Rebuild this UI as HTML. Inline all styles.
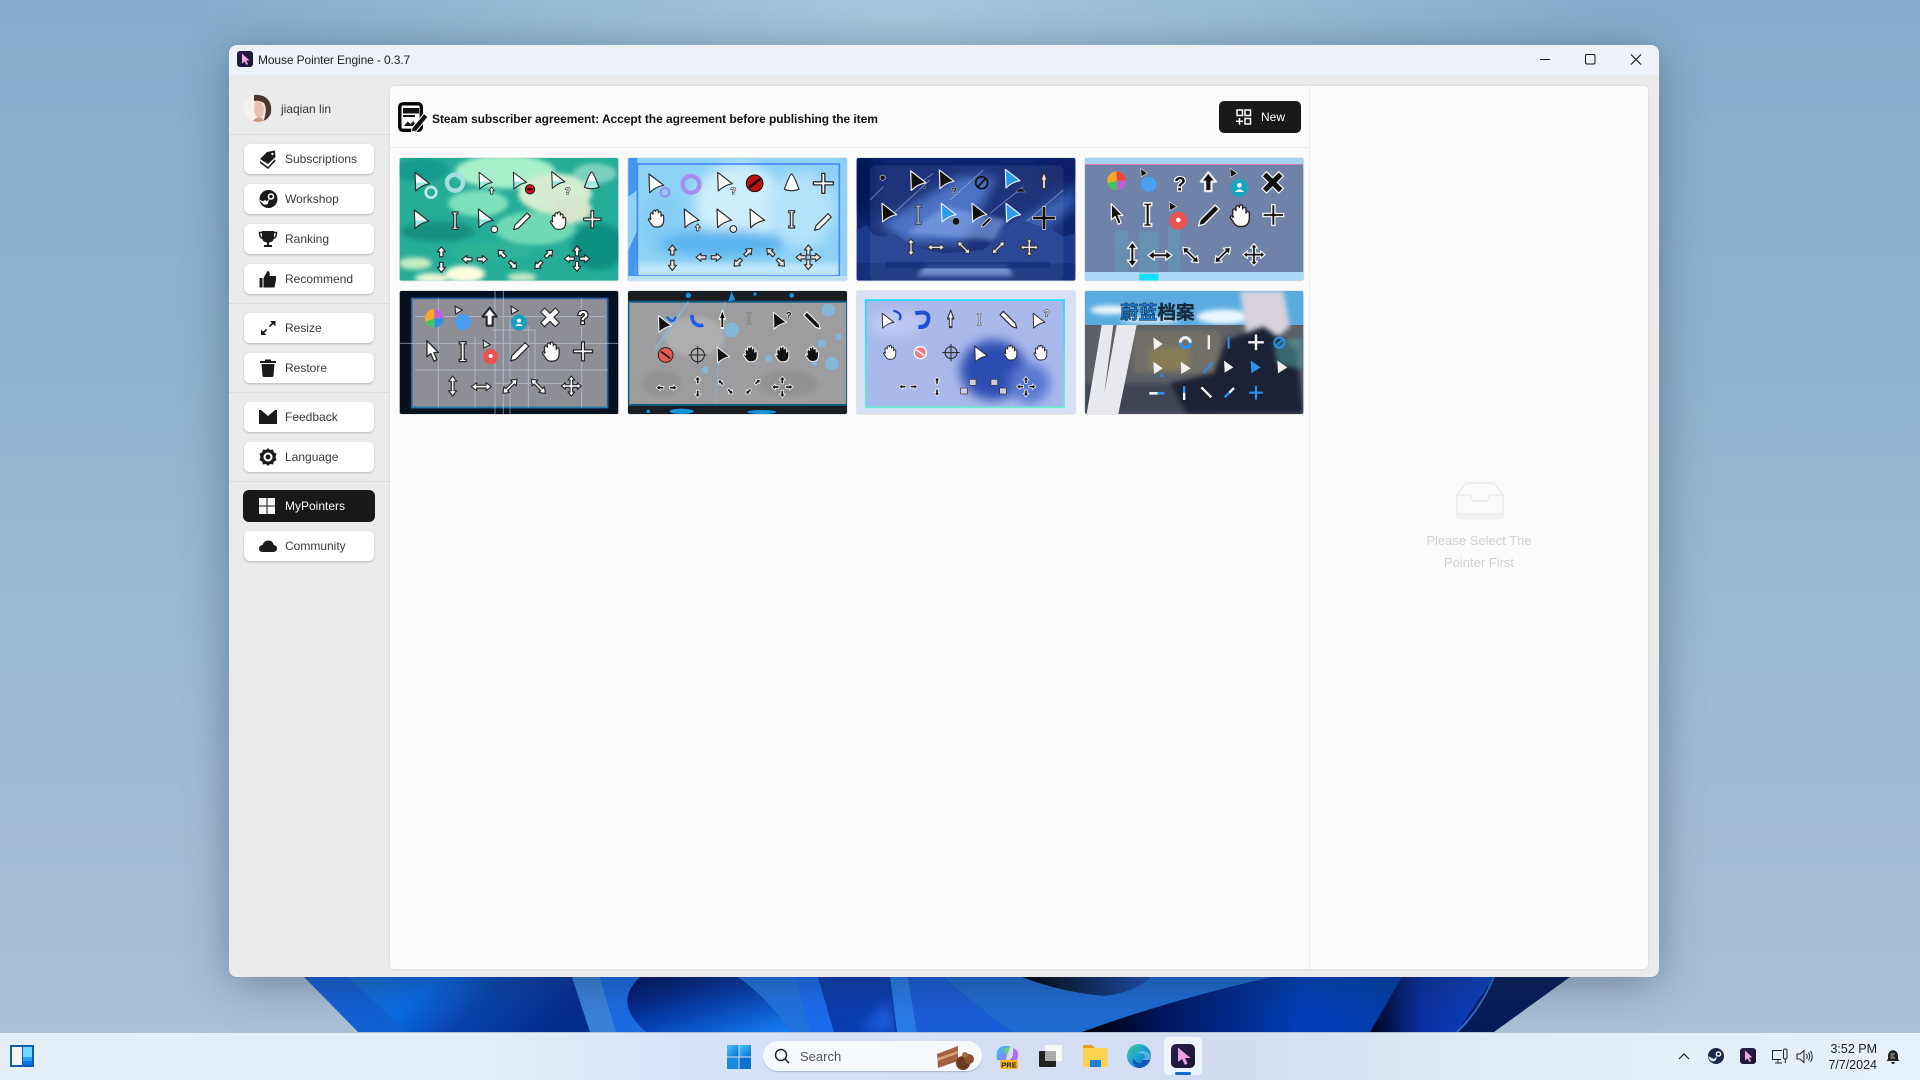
<!DOCTYPE html>
<html lang="en"><head><meta charset="utf-8"><title>Mouse Pointer Engine</title>
<style>
html,body{margin:0;padding:0;width:1920px;height:1080px;overflow:hidden}
body{position:relative;font-family:"Liberation Sans","Noto Sans CJK SC",sans-serif;font-size:12px;color:#333;
background:radial-gradient(ellipse 700px 300px at 900px 20px,#a8c8de 0%,rgba(168,200,222,0) 100%),linear-gradient(180deg,#86aecc 0%,#8fb3cf 35%,#a3bcd5 75%,#abc2d8 100%)}
.a{position:absolute}
#win{left:229px;top:45px;width:1430px;height:932px;background:#ebebeb;border-radius:8px;box-shadow:0 6px 45px rgba(30,45,70,.42)}
#tb{left:0;top:0;width:1430px;height:30px;background:#edf2f9;border-radius:8px 8px 0 0}
#panel{left:161px;top:41px;width:1258px;height:883px;background:#fbfbfb;border-radius:4px;box-shadow:0 0 2px rgba(0,0,0,.15)}
.btn{position:absolute;left:15px;width:130px;height:30px;background:#fff;border-radius:6px;box-shadow:0 1px 2px rgba(0,0,0,.22);color:#3a3a3a;line-height:31px}
.btn span{position:absolute;left:41px;top:0;white-space:nowrap}
.btn svg{position:absolute;left:14px;top:5px}
.dv{position:absolute;left:0;width:161px;height:1px;background:#dcdcdc}
#task{left:0;top:1032px;width:1920px;height:48px;border-top:1px solid #b8c2cf;box-sizing:border-box;background:linear-gradient(90deg,#e5eff8 0%,#e4eef9 25%,#d6e3fa 36%,#d6def5 50%,#d4dcf2 65%,#e2ecf9 78%,#e6f0f9 100%)}
.th{filter:blur(.35px)}
</style></head><body>

<svg width="0" height="0" style="position:absolute"><defs>
<filter id="bl" x="-30%" y="-30%" width="160%" height="160%"><feGaussianBlur stdDeviation="16"/></filter>
<filter id="bm" x="-30%" y="-30%" width="160%" height="160%"><feGaussianBlur stdDeviation="7"/></filter>
<linearGradient id="tg" x1="0" y1="0" x2="0" y2="1"><stop offset=".5" stop-color="#fff"/><stop offset=".62" stop-color="#8fe6dc"/><stop offset="1" stop-color="#c9f4ee"/></linearGradient>
<linearGradient id="cy" x1="0" y1="0" x2="0" y2="1"><stop offset="0" stop-color="#1fdcff"/><stop offset="1" stop-color="#5ff0cf"/></linearGradient>
<path id="p" d="M-22-28 L22 6 Q-2 10 -20 28 Z"/>
<path id="tri" d="M0-28 Q6-26 22 18 Q0 26 -22 18 Q-6-26 0-28Z"/>
<path id="arr" d="M-14-28 L-14 14 L-4 6 L4 26 L12 22 L4 3 L16 3 Z"/>
<path id="ib" d="M-9-26H9V-20H4V20H9V26H-9V20H-4V-20H-9Z"/>
<path id="pl" d="M-4-26H4V-4H26V4H4V26H-4V4H-26V-4H-4Z"/>
<path id="pen" d="M14-24 L24-14 L-12 22 L-26 26 L-22 12Z"/>
<path id="hand" d="M-16 4V-12a4 4 0 0 1 8 0V-20a4 4 0 0 1 8 0V-22a4 4 0 0 1 8 0V-16a4 4 0 0 1 8 0V-6a4 4 0 0 1 8 0V8q-2 18-18 18h-6q-8 0-14-10l-8-12q2-6 8-2z"/>
<path id="sa" d="M0-15 L12 0 H5 V15 H-5 V0 H-12Z"/>
<path id="dv2" d="M0-30 L12-14 H4 V14 H12 L0 30 L-12 14 H-4 V-14 H-12Z"/>
<path id="dd" d="M0-30 L10-18 H4 V-4 H18 V-10 L30 0 L18 10 V4 H4 V18 H10 L0 30 L-10 18 H-4 V4 H-18 V10 L-30 0 L-18 -10 V-4 H-4 V-18 H-10Z"/>
<path id="xx" d="M-16-28 L0-12 L16-28 L28-16 L12 0 L28 16 L16 28 L0 12 L-16 28 L-28 16 L-12 0 L-28-16Z"/>
<clipPath id="c1"><rect x="14" y="24" width="656" height="368" rx="6"/></clipPath>
<clipPath id="c2"><rect x="699" y="24" width="657" height="368" rx="6"/></clipPath>
<clipPath id="c3"><rect x="14" y="423" width="656" height="369" rx="6"/></clipPath>
<clipPath id="c4"><rect x="699" y="423" width="657" height="369" rx="6"/></clipPath>
<clipPath id="c5"><rect x="20" y="24" width="656" height="368" rx="6"/></clipPath>
<clipPath id="c6"><rect x="705" y="24" width="655" height="368" rx="6"/></clipPath>
<clipPath id="c7"><rect x="20" y="423" width="656" height="369" rx="6"/></clipPath>
<clipPath id="c8"><rect x="705" y="423" width="655" height="369" rx="6"/></clipPath>
<linearGradient id="g1" x1="0" x2="1" y1="0" y2="0">
<stop offset="0" stop-color="#1660d4"/><stop offset=".09" stop-color="#0f62d6"/><stop offset=".16" stop-color="#0a68de"/><stop offset=".3" stop-color="#0a3ea4"/><stop offset=".5" stop-color="#022a8c"/><stop offset="1" stop-color="#02308e"/></linearGradient>
<linearGradient id="g2" x1="0" y1="0" x2="1" y2=".25"><stop offset="0" stop-color="#1a70d0"/><stop offset=".35" stop-color="#0a6ce8"/><stop offset=".62" stop-color="#0a45b0"/><stop offset="1" stop-color="#032c90"/></linearGradient>
<linearGradient id="g3" x1="0" y1="0" x2="1" y2="1"><stop offset="0" stop-color="#000f55"/><stop offset=".45" stop-color="#053aa8"/><stop offset="1" stop-color="#1680f8"/></linearGradient>
<linearGradient id="g4" x1="0" x2="1" y1="0" y2="0"><stop offset="0" stop-color="#000000"/><stop offset=".25" stop-color="#00165e"/><stop offset=".7" stop-color="#0040bc"/><stop offset="1" stop-color="#003ea8"/></linearGradient>
<linearGradient id="g5" x1="0" x2="1" y1="0" y2="0"><stop offset="0" stop-color="#000"/><stop offset="1" stop-color="#1d53b8"/></linearGradient>
<linearGradient id="g6" x1="0" x2="1" y1="0" y2="0"><stop offset="0" stop-color="#00041e"/><stop offset=".4" stop-color="#0a2ea0"/><stop offset="1" stop-color="#0c44c4"/></linearGradient>
<linearGradient id="tw" x1="0" y1="0" x2="1" y2="1"><stop offset="0" stop-color="#48c4ff"/><stop offset="1" stop-color="#0a6fd0"/></linearGradient>
<linearGradient id="eg" x1="0" y1="0" x2="1" y2="1"><stop offset="0" stop-color="#3fd28e"/><stop offset=".5" stop-color="#1b9ed8"/><stop offset="1" stop-color="#0b5ebc"/></linearGradient>
<linearGradient id="ag" x1="0" y1="0" x2="1" y2="1"><stop offset="0" stop-color="#2a1e4a"/><stop offset="1" stop-color="#1a1530"/></linearGradient>
<linearGradient id="cg" x1="0" y1="0" x2="1" y2="1"><stop offset="0" stop-color="#35c7e0"/><stop offset=".5" stop-color="#5f9df5"/><stop offset="1" stop-color="#e06ad8"/></linearGradient>
<style>
.w{fill:#fff;stroke:#2a2a2a;stroke-width:3.5;stroke-linejoin:round}
.t{fill:url(#tg);stroke:#2a2a2a;stroke-width:3.5;stroke-linejoin:round}
.k{fill:#111;stroke:#eee;stroke-width:3.5;stroke-linejoin:round}
.g{fill:#e8e8e8;stroke:#333;stroke-width:3.5;stroke-linejoin:round}
.b{fill:#2b9be8;stroke:#eef;stroke-width:3.5;stroke-linejoin:round}
.q{font:bold 28px "Liberation Sans",sans-serif;text-anchor:middle;paint-order:stroke;stroke-linejoin:round}
</style>
</defs></svg>

<!-- bloom strip -->
<svg class="a" style="left:0;top:977px" width="1920" height="55" viewBox="0 977 1920 55">
<path d="M304 977L358 1032H1457L1570 977Z" fill="url(#g1)"/>
<path d="M348 977Q380 1008 408 1032H590L572 977Z" fill="url(#g2)"/>
<path d="M572 977L590 1032H616L600 977Z" fill="#3a82dc"/>
<path d="M600 977L616 1032H646Q616 1000 646 977Z" fill="#1c6ce4"/>
<path d="M640 977Q612 1003 646 1032H790Q770 1000 738 977Z" fill="url(#g3)"/>
<path d="M738 977Q770 1000 790 1032H816L796 977Z" fill="#2274e2"/>
<path d="M796 977L810 1032H834L818 977Z" fill="#1d6cf0"/>
<path d="M818 977L834 1032H895L890 977Z" fill="#0c3eb2"/>
<path d="M860 1032H895L890 1000Z" fill="#1a62e2" filter="url(#bm)"/>
<path d="M890 977L897 1032H917L908 977Z" fill="#2a7ce8"/>
<path d="M908 977L917 1032H1013Q980 1010 944 977Z" fill="#1a5ed8"/>
<path d="M944 977Q980 1010 1013 1032H1082Q1170 1000 1272 977Z" fill="#1f6cd2"/>
<path d="M1022 977Q1060 992 1105 996Q1135 992 1151 977Z" fill="url(#g5)"/>
<path d="M1082 1032Q1170 1000 1272 977H1402L1370 1032Z" fill="url(#g4)"/>
<path d="M1402 977L1370 1032H1460L1494 977Z" fill="url(#g6)"/>
<path d="M1494 977L1457 1032H1494L1570 977Z" fill="#061c58"/>
<path d="M1494 977Q1480 1010 1457 1032" stroke="#2c6ed0" stroke-width="2" fill="none"/>
</svg>

<div id="win" class="a">
 <div id="tb" class="a">
  <svg class="a" style="left:8px;top:6px" width="16" height="16" viewBox="0 0 16 16"><rect width="16" height="16" rx="3" fill="url(#ag)"/><path d="M5 2.500L5 12.500L7.500 10.500L9.500 14L11 13L9 9.500L12.500 9.500Z" fill="#f2a6e4"/></svg>
  <div class="a" style="left:29px;top:8px;color:#222;white-space:nowrap;letter-spacing:-.12px">Mouse Pointer Engine - 0.3.7</div>
  <svg class="a" style="left:1300px;top:0" width="130" height="30" viewBox="0 0 130 30" fill="none" stroke="#111" stroke-width="1"><path d="M11 14.500H21"/><rect x="56.500" y="9.500" width="9.500" height="9.500" rx="1.500"/><path d="M102 9.500L112 19.500M112 9.500L102 19.500"/></svg>
 </div>

 <svg class="a" style="left:15px;top:49px" width="28" height="28" viewBox="0 0 28 28"><defs><clipPath id="av"><circle cx="14" cy="14" r="14"/></clipPath></defs><g clip-path="url(#av)"><rect width="28" height="28" fill="#eee8e2"/><rect x="0" y="0" width="12" height="28" fill="#f4f0ec"/><path d="M10 1Q24 0 27 12Q28 22 23 28H19Q24 16 20 9Q15 6 10 7Z" fill="#4a3630"/><path d="M11 7Q19 7 20 15Q19 23 15 24Q10 22 10 15Z" fill="#ecc0aa"/><path d="M8 28Q12 22 18 24L21 28Z" fill="#cf9a88"/></g></svg>
 <div class="a" style="left:52px;top:57px;color:#333;white-space:nowrap">jiaqian lin</div>
 <div class="dv" style="top:89px"></div>

 <div class="btn" style="top:99px"><svg width="20" height="20" viewBox="0 0 20 20"><path d="M2 10L9 3L17 1.500L17.500 8L10 15Z" fill="#1b1b1b"/><path d="M2 12L10 18L17 10L17.500 12L10 20L2 14Z" fill="#1b1b1b"/><circle cx="14.500" cy="5" r="1.200" fill="#fff"/></svg><span>Subscriptions</span></div>
 <div class="btn" style="top:139px"><svg width="20" height="20" viewBox="0 0 20 20"><circle cx="10.500" cy="10" r="9" fill="#1b1b1b"/><circle cx="13" cy="7.500" r="3.300" fill="#fff"/><circle cx="13" cy="7.500" r="1.700" fill="#1b1b1b"/><path d="M1 10.500L8 13.500L11 9.500L10 14.500Q7 17 4 14Z" fill="#fff"/><circle cx="7" cy="13.500" r="2.200" fill="#fff"/></svg><span>Workshop</span></div>
 <div class="btn" style="top:179px"><svg width="20" height="20" viewBox="0 0 20 20"><path d="M4 2H16V8Q16 13 11 13.500V16H14V18H6V16H9V13.500Q4 13 4 8Z" fill="#1b1b1b"/><path d="M4 3.500H1.500Q1.500 9 5 9.500M16 3.500H18.500Q18.500 9 15 9.500" stroke="#1b1b1b" stroke-width="1.500" fill="none"/></svg><span>Ranking</span></div>
 <div class="btn" style="top:219px"><svg width="20" height="20" viewBox="0 0 20 20"><rect x="1.500" y="9" width="3" height="9.500" fill="#1b1b1b"/><path d="M5.500 9L9.500 2Q12.500 2 11.500 7H18V11L16.500 18.500H5.500Z" fill="#1b1b1b"/></svg><span>Recommend</span></div>
 <div class="dv" style="top:258px"></div>
 <div class="btn" style="top:268px"><svg width="20" height="20" viewBox="0 0 20 20"><path d="M5 15L8.500 11.500M11.500 8.500L15 5" stroke="#1b1b1b" stroke-width="1.800" fill="none"/><path d="M12 3H17.500V8.500ZM3 11.500V17H8.500Z" fill="#1b1b1b"/></svg><span>Resize</span></div>
 <div class="btn" style="top:308px"><svg width="20" height="20" viewBox="0 0 20 20"><path d="M7 1.500H13V3H18V5H2V3H7Z" fill="#1b1b1b"/><path d="M3.500 6H16.500L15.500 18Q15.300 19 14 19H6Q4.700 19 4.500 18Z" fill="#1b1b1b"/></svg><span>Restore</span></div>
 <div class="dv" style="top:347px"></div>
 <div class="btn" style="top:357px"><svg width="20" height="20" viewBox="0 0 20 20"><rect x="1" y="3" width="18" height="14" fill="#1b1b1b"/><path d="M3 3H17L10 9Z" fill="#fff"/></svg><span>Feedback</span></div>
 <div class="btn" style="top:397px"><svg width="20" height="20" viewBox="0 0 20 20"><path d="M10 1L12 3L15 2.500L15.800 5.400L18.500 6.700L17.500 10L18.500 13.300L15.800 14.600L15 17.500L12 17L10 19L8 17L5 17.500L4.200 14.600L1.500 13.300L2.500 10L1.500 6.700L4.200 5.400L5 2.500L8 3Z" fill="#1b1b1b"/><circle cx="10" cy="10" r="3.500" fill="none" stroke="#fff" stroke-width="2"/></svg><span>Language</span></div>
 <div class="dv" style="top:436px"></div>
 <div class="btn" style="top:445px;left:14px;width:132px;height:32px;background:#18181a;color:#fff;line-height:33px;box-shadow:none"><span style="left:42px">MyPointers</span><svg style="left:15px;top:7px" width="18" height="18" viewBox="0 0 18 18" fill="#f5f5f5"><rect x="1" y="1" width="7.500" height="7.500"/><rect x="9.500" y="1" width="7.500" height="7.500"/><rect x="1" y="9.500" width="7.500" height="7.500"/><rect x="9.500" y="9.500" width="7.500" height="7.500"/></svg></div>
 <div class="btn" style="top:486px"><svg width="20" height="20" viewBox="0 0 20 20"><path d="M5 16Q1 16 1 12.500Q1 9.500 4.500 9Q6 4.500 10.500 4.500Q14.500 4.500 15.800 9Q19 9.500 19 12.500Q19 16 15 16Z" fill="#1b1b1b"/></svg><span>Community</span></div>

 <div id="panel" class="a">
  <div class="a" style="left:0;top:61px;width:919px;height:1px;background:#ececec"></div>
  <div class="a" style="left:919px;top:0;width:1px;height:883px;background:#ececec"></div>
  <svg class="a" style="left:8px;top:16px" width="31" height="31" viewBox="0 0 31 31"><rect x="1.800" y="1.800" width="21.500" height="26.500" rx="3" fill="#fff" stroke="#000" stroke-width="3.400"/><rect x="5" y="6" width="16" height="5.500" fill="#111"/><rect x="5" y="13" width="12" height="2" fill="#111"/><path d="M6 24L9.500 19.500L12.500 22L15.500 19L18 24Z" fill="#111"/><path d="M14 26L26 11.500L30 15L18.500 29L13.500 30Z" fill="#111" stroke="#fff" stroke-width="1"/></svg>
  <div class="a" style="left:42px;top:26px;font-weight:bold;color:#111;white-space:nowrap;letter-spacing:-.06px">Steam subscriber agreement: Accept the agreement before publishing the item</div>
  <div class="a" style="left:829px;top:15px;width:82px;height:32px;background:#18181a;border-radius:5px;color:#fff">
   <svg class="a" style="left:16px;top:8px" width="17" height="17" viewBox="0 0 17 17" fill="none" stroke="#fff" stroke-width="1.500"><rect x="2" y="1" width="5.500" height="5.500"/><rect x="10" y="1" width="5.500" height="5.500"/><rect x="10" y="9.500" width="5.500" height="5.500"/><path d="M1 12.300H8M4.500 9V15.800"/></svg>
   <div class="a" style="left:42px;top:9px">New</div>
  </div>
  <svg class="a" style="left:1066px;top:395px" width="48" height="40" viewBox="0 0 48 40"><ellipse cx="24" cy="34" rx="30" ry="5" fill="#f2f2f2"/><path d="M1 14L10 2H38L47 14V31Q47 33 45 33H3Q1 33 1 31Z" fill="#fbfbfb" stroke="#e6e6e6" stroke-width="1"/><path d="M1 14H14Q15 20 18 20H30Q33 20 34 14H47" fill="none" stroke="#e6e6e6"/></svg>
  <div class="a" style="left:799px;top:444px;width:580px;text-align:center;font-size:13px;color:#d2d2d2;line-height:22px">Please Select The<br>Pointer First</div>
 </div>
</div>

<!-- thumbnails left columns -->
<svg class="a th" style="left:395px;top:150px" width="460" height="270" viewBox="0 0 1380 810">
<g fill="none" stroke="#e5e5e5" stroke-width="5"><rect x="14" y="24" width="656" height="368" rx="6"/><rect x="699" y="24" width="657" height="368" rx="6"/><rect x="14" y="423" width="656" height="369" rx="6"/><rect x="699" y="423" width="657" height="369" rx="6"/></g>

<g clip-path="url(#c1)"><rect x="14" y="24" width="656" height="368" fill="#25ad98"/>
<g filter="url(#bm)"><ellipse cx="330" cy="65" rx="150" ry="50" fill="#a8f0cc"/><ellipse cx="480" cy="130" rx="110" ry="60" fill="#d4ecd0"/><ellipse cx="250" cy="160" rx="90" ry="40" fill="#7de0bc"/><ellipse cx="420" cy="235" rx="120" ry="50" fill="#6fd9b4"/><ellipse cx="130" cy="245" rx="110" ry="30" fill="#129080"/><ellipse cx="610" cy="290" rx="80" ry="70" fill="#0e8f82"/><ellipse cx="600" cy="70" rx="65" ry="30" fill="#7ad0bc"/><ellipse cx="290" cy="305" rx="120" ry="26" fill="#2fb297"/><ellipse cx="80" cy="60" rx="80" ry="36" fill="#149a8e"/><ellipse cx="530" cy="180" rx="60" ry="40" fill="#d6e6cc"/>
<ellipse cx="210" cy="372" rx="60" ry="26" fill="#fdfde0"/><ellipse cx="60" cy="340" rx="50" ry="18" fill="#c8ecc4"/><ellipse cx="110" cy="385" rx="50" ry="16" fill="#ecf7d4"/><ellipse cx="380" cy="382" rx="44" ry="14" fill="#bfe8c6"/></g>
<use href="#p" class="t" transform="translate(82 95)"/><circle cx="108" cy="127" r="16" fill="none" stroke="#bfe9e6" stroke-width="8"/><circle cx="180" cy="98" r="24" fill="none" stroke="#a8dde0" stroke-width="13"/>
<use href="#p" class="t" transform="translate(272 92) scale(.9)"/><use href="#sa" class="g" transform="translate(290 122) scale(.7)"/>
<use href="#p" class="t" transform="translate(375 92) scale(.9)"/><circle cx="405" cy="118" r="14" fill="#c9161a" stroke="#222" stroke-width="3"/><path d="M396 118H414" stroke="#111" stroke-width="5"/>
<use href="#p" class="t" transform="translate(490 90) scale(.9)"/><text x="518" y="132" class="q" fill="#eee" stroke="#222" stroke-width="3">?</text>
<use href="#tri" class="t" transform="translate(590 94)"/>
<use href="#p" class="t" transform="translate(80 208)"/><use href="#ib" class="g" transform="translate(180 212)"/><use href="#p" class="t" transform="translate(272 205)"/><circle cx="298" cy="238" r="10" fill="#eee" stroke="#222" stroke-width="3"/>
<use href="#pen" class="w" transform="translate(382 213)"/><use href="#hand" class="w" transform="translate(488 212)"/><use href="#pl" class="w" transform="translate(592 208)"/>
<use href="#sa" class="w" transform="translate(139 305)"/><use href="#sa" class="w" transform="translate(139 352) rotate(180)"/><use href="#sa" class="w" transform="translate(216 328) rotate(-90)"/><use href="#sa" class="w" transform="translate(262 328) rotate(90)"/><use href="#sa" class="w" transform="translate(320 311) rotate(-45)"/><use href="#sa" class="w" transform="translate(354 345) rotate(135)"/><use href="#sa" class="w" transform="translate(430 345) rotate(-135)"/><use href="#sa" class="w" transform="translate(462 311) rotate(45)"/>
<use href="#sa" class="w" transform="translate(546 303)"/><use href="#sa" class="w" transform="translate(546 349) rotate(180)"/><use href="#sa" class="w" transform="translate(523 326) rotate(-90)"/><use href="#sa" class="w" transform="translate(569 326) rotate(90)"/></g>

<g clip-path="url(#c2)"><rect x="699" y="24" width="657" height="368" fill="#8fd2f6"/>
<g filter="url(#bl)"><ellipse cx="1030" cy="160" rx="130" ry="120" fill="#cdeefb"/><ellipse cx="1220" cy="180" rx="100" ry="110" fill="#b4e2f9"/><ellipse cx="800" cy="220" rx="60" ry="100" fill="#84cdf5"/><ellipse cx="980" cy="280" rx="190" ry="40" fill="#5ab4ee"/></g>
<path d="M700 300L727 240V392H700Z M700 24H727V120L700 140Z" fill="#2a8aea" opacity=".8"/><path d="M727 340H1335V378H727Z" fill="#d4eefb" opacity=".7" filter="url(#bm)"/>
<rect x="727" y="42" width="606" height="336" fill="none" stroke="#4a88f0" stroke-width="5"/><rect x="700" y="378" width="656" height="14" fill="#b8e2fa"/>
<use href="#p" class="w" transform="translate(784 100)"/><circle cx="810" cy="127" r="13" fill="none" stroke="#9c8cf0" stroke-width="6"/><circle cx="888" cy="103" r="25" fill="none" stroke="#a88cf0" stroke-width="13"/>
<use href="#p" class="w" transform="translate(990 95)"/><text x="1015" y="132" class="q" fill="#eee" stroke="#222" stroke-width="3">?</text><circle cx="1079" cy="100" r="25" fill="#c01014" stroke="#111" stroke-width="3"/><path d="M1062 113L1096 87" stroke="#111" stroke-width="8"/>
<use href="#tri" class="w" transform="translate(1190 100)"/><use href="#pl" class="w" transform="translate(1285 100) scale(1.150)"/>
<use href="#hand" class="w" transform="translate(782 205)"/><use href="#p" class="w" transform="translate(890 205)"/><use href="#sa" class="g" transform="translate(908 232) scale(.7)"/><use href="#p" class="w" transform="translate(988 205)"/><circle cx="1015" cy="237" r="10" fill="#eee" stroke="#222" stroke-width="3"/><use href="#p" class="w" transform="translate(1087 205)"/><use href="#ib" class="g" transform="translate(1190 208)"/><use href="#pen" class="w" transform="translate(1285 215)"/>
<use href="#sa" class="g" transform="translate(832 300)"/><use href="#sa" class="g" transform="translate(832 346) rotate(180)"/><use href="#sa" class="g" transform="translate(918 322) rotate(-90)"/><use href="#sa" class="g" transform="translate(964 322) rotate(90)"/><use href="#sa" class="g" transform="translate(1028 338) rotate(-135)"/><use href="#sa" class="g" transform="translate(1060 306) rotate(45)"/><use href="#sa" class="g" transform="translate(1126 306) rotate(-45)"/><use href="#sa" class="g" transform="translate(1158 338) rotate(135)"/>
<use href="#sa" class="g" transform="translate(1240 300)"/><use href="#sa" class="g" transform="translate(1240 344) rotate(180)"/><use href="#sa" class="g" transform="translate(1218 322) rotate(-90)"/><use href="#sa" class="g" transform="translate(1262 322) rotate(90)"/></g>

<g clip-path="url(#c3)"><rect x="14" y="423" width="656" height="369" fill="#06101f"/>
<rect x="50" y="445" width="588" height="328" fill="#8e8e96" stroke="#2a5a9f" stroke-width="5"/><path d="M50 772H638" stroke="#1e7fa8" stroke-width="5"/>
<g stroke="#c7d9ec" stroke-width="3" opacity=".55" fill="none"><path d="M14 580H670M60 500H630M60 660H640M300 423V792M325 423V792M345 500V792M400 530V772M240 560V772M290 540H420V700M300 700H560M130 445V772M560 445V772"/></g>
<circle cx="118" cy="505" r="28" fill="#f9a825"/><path d="M118 505L118 477A28 28 0 0 1 146 505Z" fill="#c05fd8"/><path d="M118 505L146 505A28 28 0 0 1 118 533Z" fill="#2f8ef0"/><path d="M118 505L118 533A28 28 0 0 1 92 515Z" fill="#3ec75a"/>
<path d="M180 468L202 480L182 492Z" fill="#ddd" stroke="#222" stroke-width="3"/><circle cx="204" cy="516" r="24" fill="#4a9df0"/>
<use href="#sa" class="w" transform="translate(284 500) scale(1.800)"/>
<path d="M348 468L370 482L350 492Z" fill="#ddd" stroke="#222" stroke-width="3"/><circle cx="372" cy="518" r="24" fill="#18a0c0"/><circle cx="372" cy="512" r="6" fill="#fff"/><path d="M360 528Q372 516 384 528Z" fill="#fff"/>
<use href="#xx" class="w" transform="translate(465 502)"/><text x="564" y="522" class="q" style="font-size:54px" fill="#fff" stroke="#111" stroke-width="7">?</text>
<use href="#arr" class="w" transform="translate(112 604) scale(1.150)"/><use href="#ib" class="w" transform="translate(203 605) scale(1.150)"/><path d="M264 570L286 584L266 594Z" fill="#ddd" stroke="#222" stroke-width="3"/><circle cx="287" cy="620" r="23" fill="#ea5350"/><circle cx="287" cy="618" r="6" fill="#fff"/>
<use href="#pen" class="w" transform="translate(375 604) scale(1.100)"/><use href="#hand" class="w" transform="translate(466 605) scale(1.100)"/><use href="#pl" class="w" transform="translate(564 604) scale(1.100)"/>
<use href="#dv2" class="w" transform="translate(173 708)"/><use href="#dv2" class="w" transform="translate(259 710) rotate(90)"/><use href="#dv2" class="w" transform="translate(345 709) rotate(45)"/><use href="#dv2" class="w" transform="translate(430 709) rotate(-45)"/><use href="#dd" class="w" transform="translate(529 708)"/></g>

<g clip-path="url(#c4)"><rect x="699" y="423" width="657" height="369" fill="#1a1d22"/>
<rect x="700" y="455" width="656" height="310" fill="#9d9d9f" stroke="#0e5a80" stroke-width="6"/>
<g filter="url(#bm)"><ellipse cx="900" cy="560" rx="90" ry="60" fill="#aeaeae"/><ellipse cx="1180" cy="700" rx="90" ry="40" fill="#929294"/><ellipse cx="800" cy="700" rx="60" ry="40" fill="#939394"/></g>
<g fill="#7dbde6" opacity=".8"><circle cx="1010" cy="540" r="22"/><circle cx="1300" cy="480" r="20"/><circle cx="1280" cy="580" r="12"/><circle cx="1330" cy="560" r="10"/><circle cx="1120" cy="625" r="10"/><circle cx="1260" cy="640" r="8"/><circle cx="1310" cy="640" r="20"/><circle cx="930" cy="660" r="10"/></g><path d="M780 600L880 455" stroke="#80bde8" stroke-width="5" opacity=".8"/><path d="M990 455L960 760" stroke="#80bde8" stroke-width="3" opacity=".6"/>
<g fill="#1792dc"><circle cx="880" cy="436" r="8"/><path d="M1010 423L1000 455L1020 450Z"/><circle cx="1080" cy="432" r="5"/><circle cx="1190" cy="436" r="7"/><ellipse cx="860" cy="784" rx="36" ry="8"/><ellipse cx="1100" cy="786" rx="44" ry="6"/><circle cx="760" cy="784" r="5"/></g>
<use href="#p" class="k" transform="translate(810 522) scale(.9)"/><path d="M815 500Q835 525 842 500" fill="none" stroke="#1c5af0" stroke-width="7"/><path d="M892 495A25 25 0 0 0 925 525" fill="none" stroke="#1c5af0" stroke-width="11"/><use href="#sa" class="k" transform="translate(982 507) scale(.8 1.800)"/><use href="#ib" fill="#999" stroke="#777" stroke-width="2" transform="translate(1062 505) scale(.7)"/><use href="#p" class="k" transform="translate(1155 512) scale(.9)"/><text x="1181" y="505" class="q" fill="#111" stroke="#eee" stroke-width="3">?</text><use href="#pen" class="k" transform="translate(1250 510) scale(-1 1)"/>
<circle cx="812" cy="615" r="22" fill="#ea5a55" stroke="#222" stroke-width="3"/><path d="M799 605L825 625" stroke="#111" stroke-width="5"/><circle cx="908" cy="615" r="20" fill="#aaa" stroke="#222" stroke-width="3"/><path d="M908 588V642M881 615H935" stroke="#222" stroke-width="3"/><use href="#p" class="k" transform="translate(985 615) scale(.85)"/><use href="#hand" class="k" transform="translate(1065 612) scale(.9)"/><use href="#hand" class="k" transform="translate(1160 612) scale(.9)"/><use href="#hand" class="k" transform="translate(1250 612) scale(.85)"/>
<use href="#sa" class="k" transform="translate(795 713) rotate(-90) scale(.75)"/><use href="#sa" class="k" transform="translate(835 713) rotate(90) scale(.75)"/><use href="#sa" class="k" transform="translate(908 690) scale(.75)"/><use href="#sa" class="k" transform="translate(908 732) rotate(180) scale(.75)"/><use href="#sa" class="k" transform="translate(977 697) rotate(-45) scale(.7)"/><use href="#sa" class="k" transform="translate(1006 725) rotate(135) scale(.7)"/><use href="#sa" class="k" transform="translate(1060 725) rotate(-135) scale(.7)"/><use href="#sa" class="k" transform="translate(1088 695) rotate(45) scale(.7)"/>
<use href="#sa" class="k" transform="translate(1162 690) scale(.75)"/><use href="#sa" class="k" transform="translate(1162 732) rotate(180) scale(.75)"/><use href="#sa" class="k" transform="translate(1141 711) rotate(-90) scale(.75)"/><use href="#sa" class="k" transform="translate(1183 711) rotate(90) scale(.75)"/></g>
</svg>

<!-- thumbnails right columns -->
<svg class="a th" style="left:850px;top:150px" width="460" height="270" viewBox="0 0 1380 810">
<g fill="none" stroke="#e5e5e5" stroke-width="5"><rect x="20" y="24" width="656" height="368" rx="6"/><rect x="705" y="24" width="655" height="368" rx="6"/><rect x="20" y="423" width="656" height="369" rx="6"/><rect x="705" y="423" width="655" height="369" rx="6"/></g>

<g clip-path="url(#c5)"><rect x="20" y="24" width="656" height="368" fill="#0d2470"/>
<g filter="url(#bl)"><path d="M90 220L330 80L440 80L340 280L170 280Z" fill="#3f68c2"/><path d="M420 270L676 110V170L500 300Z" fill="#3058b0"/><ellipse cx="40" cy="100" rx="40" ry="100" fill="#041656"/><ellipse cx="640" cy="60" rx="60" ry="40" fill="#0a1e68"/></g>
<path d="M170 250L280 170L470 210L430 270Z" fill="#7da2e8" opacity=".6" filter="url(#bm)"/>
<g stroke="#a8c4f2" stroke-width="3" opacity=".5"><path d="M120 200L240 90M300 150L400 60M420 190L520 110M500 240L640 120M180 120L250 70M60 150L100 110"/></g>
<path d="M20 240L50 225L70 255L100 260L130 250L190 290L280 310L400 300L470 240L520 210L560 225L600 235L640 260L676 250V340H20Z" fill="#1b3a8e"/>
<rect x="20" y="340" width="656" height="52" fill="#14307c"/><path d="M230 342H470L490 378H200Z" fill="#8aa6e6" opacity=".75" filter="url(#bm)"/>
<rect x="60" y="46" width="580" height="346" rx="16" fill="#fff" opacity=".07"/><rect x="105" y="335" width="495" height="20" rx="8" fill="#0f2e78" opacity=".7"/>
<circle cx="98" cy="83" r="8" fill="#111" stroke="#ddd" stroke-width="2"/>
<use href="#p" class="k" transform="translate(205 92) scale(1.050)"/><circle cx="223" cy="112" r="4" fill="#111" stroke="#fff"/><use href="#p" class="k" transform="translate(290 88)"/><text x="312" y="132" class="q" fill="#222" stroke="#bbb" stroke-width="3">?</text><circle cx="395" cy="98" r="18" fill="none" stroke="#111" stroke-width="5"/><path d="M384 110L406 86" stroke="#111" stroke-width="5"/><use href="#p" class="b" transform="translate(488 86)"/><path d="M498 126Q512 104 526 126Z" fill="#111" stroke="#eee"/><use href="#sa" class="g" transform="translate(582 92) scale(.8 1.700)"/>
<use href="#p" class="k" transform="translate(118 188)"/><use href="#ib" fill="#8ea2c8" stroke="#333" stroke-width="2" transform="translate(205 194) scale(1 1.100)"/><use href="#p" class="b" transform="translate(296 188)"/><circle cx="318" cy="214" r="11" fill="#111" stroke="#eee"/><use href="#p" class="k" transform="translate(388 188)"/><use href="#pen" class="k" transform="translate(410 216) scale(.6)"/><use href="#p" class="b" transform="translate(490 188)"/><use href="#pl" fill="#111" stroke="#eee" stroke-width="1.500" transform="translate(582 204) scale(1.300)"/>
<use href="#dv2" class="g" transform="translate(183 292) scale(.85)"/><use href="#dv2" class="g" transform="translate(258 292) rotate(90) scale(.85)"/><use href="#dv2" class="g" transform="translate(341 293) rotate(-45) scale(.85)"/><use href="#dv2" class="g" transform="translate(445 293) rotate(45) scale(.85)"/><use href="#dd" class="g" transform="translate(538 292) scale(.9)"/></g>

<g clip-path="url(#c6)"><rect x="705" y="24" width="655" height="368" fill="#6f83a8"/>
<rect x="705" y="24" width="655" height="20" fill="#a9d2ec"/><rect x="705" y="42" width="655" height="3" fill="#cf7eb0"/><rect x="705" y="366" width="655" height="26" fill="#abd9f6"/><rect x="868" y="372" width="57" height="20" fill="#0fe3fb"/>
<g fill="#5f9fbd" opacity=".45"><rect x="795" y="240" width="40" height="125"/><rect x="868" y="245" width="57" height="125"/><rect x="955" y="230" width="35" height="135"/></g>
<circle cx="800" cy="92" r="28" fill="#f9a825"/><path d="M800 92V64A28 28 0 0 1 828 92Z" fill="#e8483c"/><path d="M800 92H828A28 28 0 0 1 800 120Z" fill="#bf5fd8"/><path d="M800 92V120A28 28 0 0 1 773 100Z" fill="#3ec75a"/>
<path d="M872 55L892 70L874 80Z" fill="#111" stroke="#ddd" stroke-width="2"/><circle cx="896" cy="103" r="23" fill="#4a9ff0"/><text x="990" y="122" class="q" style="font-size:58px" fill="#111" stroke="#fff" stroke-width="7">?</text><use href="#sa" class="k" transform="translate(1075 95) scale(1.900)"/><path d="M1140 55L1162 70L1142 82Z" fill="#111" stroke="#ddd" stroke-width="2"/><circle cx="1168" cy="114" r="27" fill="#18a4c0"/><circle cx="1168" cy="106" r="7" fill="#fff"/><path d="M1154 126Q1168 110 1182 126Z" fill="#fff"/><use href="#xx" class="k" transform="translate(1268 97) scale(1.150)"/>
<use href="#arr" class="k" transform="translate(800 193) scale(1.150)"/><use href="#ib" class="k" transform="translate(893 194) scale(1.350)"/><path d="M958 155L980 170L960 182Z" fill="#111" stroke="#ddd" stroke-width="2"/><circle cx="985" cy="212" r="27" fill="#ea5350"/><circle cx="985" cy="210" r="7" fill="#fff"/><use href="#pen" class="k" transform="translate(1078 195) scale(1.250)"/><use href="#hand" class="w" transform="translate(1168 197) scale(1.250)"/><use href="#pl" class="k" transform="translate(1270 195) scale(1.200)"/>
<use href="#dv2" class="k" transform="translate(847 313) scale(1.250)"/><use href="#dv2" class="k" transform="translate(930 316) rotate(90) scale(1.200)"/><use href="#dv2" class="k" transform="translate(1022 315) rotate(-45) scale(1.100)"/><use href="#dv2" class="k" transform="translate(1118 315) rotate(45) scale(1.100)"/><use href="#dd" class="k" transform="translate(1212 314) scale(1.100)"/></g>

<g clip-path="url(#c7)"><rect x="20" y="423" width="656" height="369" fill="#d8def4"/>
<rect x="47" y="450" width="595" height="322" fill="#aab9ec"/>
<g filter="url(#bl)"><ellipse cx="430" cy="660" rx="100" ry="90" fill="#2f4eb2"/><ellipse cx="540" cy="700" rx="60" ry="60" fill="#5a78d2"/><ellipse cx="140" cy="520" rx="80" ry="40" fill="#bcc9f2"/></g>
<path d="M20 423H676V450H20ZM20 772H676V792H20ZM20 450H47V772H20ZM642 450H676V772H642Z" fill="#d9dff5"/>
<rect x="47" y="450" width="595" height="322" fill="none" stroke="url(#cy)" stroke-width="5"/>
<use href="#p" class="w" transform="translate(114 512) scale(.8)"/><path d="M130 482Q160 490 148 510" fill="none" stroke="#1e50d0" stroke-width="7"/><path d="M196 490Q240 480 235 510Q230 535 205 530" fill="none" stroke="#1e50d0" stroke-width="12"/><use href="#sa" class="g" transform="translate(302 506) scale(.8 1.700)"/><use href="#ib" fill="#bcc" stroke="#555" stroke-width="2" transform="translate(388 508) scale(.7)"/><use href="#pen" class="w" transform="translate(474 508) scale(-1 1)"/><use href="#p" class="w" transform="translate(567 512) scale(.8)"/><text x="590" y="500" class="q" fill="#eee" stroke="#333" stroke-width="3">?</text>
<use href="#hand" class="w" transform="translate(118 607) scale(.8)"/><circle cx="211" cy="608" r="18" fill="#f0787a" stroke="#fff" stroke-width="4"/><path d="M200 600L222 616" stroke="#fff" stroke-width="5"/><circle cx="303" cy="608" r="18" fill="#9fb0dc" stroke="#222" stroke-width="3"/><path d="M303 582V634M277 608H329" stroke="#222" stroke-width="3"/><use href="#p" class="w" transform="translate(393 612) scale(.85)"/><use href="#hand" class="w" transform="translate(480 608) scale(.85)"/><use href="#hand" class="w" transform="translate(570 608) scale(.85)"/>
<use href="#sa" class="k" transform="translate(157 710) rotate(-90) scale(.7)"/><use href="#sa" class="k" transform="translate(192 710) rotate(90) scale(.7)"/><use href="#sa" class="k" transform="translate(261 692) scale(.7)"/><use href="#sa" class="k" transform="translate(261 728) rotate(180) scale(.7)"/><rect x="332" y="714" width="20" height="18" fill="#ccd" stroke="#333" stroke-width="2"/><rect x="358" y="688" width="20" height="18" fill="#ccd" stroke="#333" stroke-width="2"/><rect x="423" y="688" width="20" height="18" fill="#ccd" stroke="#333" stroke-width="2"/><rect x="449" y="714" width="20" height="18" fill="#ccd" stroke="#333" stroke-width="2"/>
<use href="#sa" class="k" transform="translate(528 690) scale(.7)"/><use href="#sa" class="k" transform="translate(528 730) rotate(180) scale(.7)"/><use href="#sa" class="k" transform="translate(510 710) rotate(-90) scale(.7)"/><use href="#sa" class="k" transform="translate(547 710) rotate(90) scale(.7)"/></g>

<g clip-path="url(#c8)"><rect x="705" y="423" width="655" height="110" fill="#5aace0"/>
<g filter="url(#bm)" fill="#eaf5fb"><ellipse cx="780" cy="480" rx="60" ry="14"/><ellipse cx="1120" cy="500" rx="80" ry="22"/><ellipse cx="900" cy="510" rx="90" ry="12" fill="#c9e2f2"/></g>
<rect x="705" y="525" width="655" height="267" fill="#5c5f66"/>
<g filter="url(#bm)"><rect x="850" y="540" width="260" height="130" fill="#727066"/><rect x="900" y="590" width="120" height="70" fill="#857c58"/><rect x="705" y="700" width="400" height="92" fill="#3f4454"/></g>
<path d="M710 792L755 525H790L755 792Z M752 792L800 525H860L805 792Z" fill="#e8e9ee"/>
<text x="810" y="507" style="font:bold 56px 'Liberation Sans','Noto Sans CJK SC',sans-serif"><tspan fill="#1f7fd6" stroke="#0e2030" stroke-width="1.500">蔚蓝</tspan><tspan fill="#1a2a3a" stroke="#0e2030" stroke-width="1">档案</tspan></text>
<path d="M1170 423H1300L1320 530L1260 580L1190 560Z" fill="#d7d2dc" filter="url(#bm)"/>
<path d="M1130 570L1240 530L1340 600L1360 792H1010L960 700L1090 670Z" fill="#1e2436" filter="url(#bm)"/><path d="M1270 580L1360 560V660L1280 640Z" fill="#4fa0a0" opacity=".55" filter="url(#bm)"/>
<path d="M910 562L938 582L912 600Z" fill="#f2f2f2"/><circle cx="1006" cy="578" r="15" fill="none" stroke="#2c90f0" stroke-width="9"/><path d="M991 578A15 15 0 0 1 1021 578" fill="none" stroke="#f2f2f2" stroke-width="9"/><rect x="1073" y="556" width="7" height="42" fill="#f2f2f2"/><rect x="1133" y="560" width="6" height="36" fill="#2c90f0"/><use href="#pl" fill="#f5f5f5" transform="translate(1218 577) scale(.9)"/><circle cx="1288" cy="578" r="15" fill="none" stroke="#2c90f0" stroke-width="6"/><path d="M1280 586L1296 570" stroke="#2c90f0" stroke-width="5"/>
<path d="M910 635L938 655L912 672Z" fill="#f2f2f2"/><path d="M932 670L946 680H930Z" fill="#2c90f0"/><path d="M992 635L1022 655L994 672Z" fill="#f2f2f2"/><path d="M1060 668L1088 638" stroke="#2c90f0" stroke-width="6"/><path d="M1122 632L1150 652L1124 668Z" fill="#f2f2f2"/><path d="M1202 632L1232 652L1204 670Z" fill="#2c90f0"/><path d="M1282 632L1312 652L1284 670Z" fill="#eee"/>
<rect x="898" y="726" width="25" height="8" fill="#f2f2f2"/><rect x="923" y="726" width="20" height="8" fill="#2c90f0"/><rect x="999" y="708" width="7" height="20" fill="#2c90f0"/><rect x="999" y="728" width="7" height="22" fill="#f2f2f2"/><path d="M1054 712L1084 742" stroke="#f2f2f2" stroke-width="7"/><path d="M1124 742L1152 714" stroke="#2c90f0" stroke-width="7"/><path d="M1138 728L1152 714" stroke="#f2f2f2" stroke-width="7"/><use href="#pl" fill="#2c90f0" transform="translate(1218 728) scale(.8)"/></g>
</svg>

<!-- taskbar -->
<div id="task" class="a"></div>
<svg class="a" style="left:10px;top:1045px" width="24" height="22" viewBox="0 0 24 22"><rect width="24" height="22" fill="#0f5bb0"/><rect x="2" y="2" width="10" height="18" fill="#f5f5f5"/><rect x="13" y="2" width="9" height="10" fill="#6ed8ff"/><rect x="13" y="12" width="9" height="4" fill="#2aa0f0"/><rect x="13" y="16" width="9" height="4" fill="#0a78e0"/></svg>
<svg class="a" style="left:727px;top:1045px" width="24" height="24" viewBox="0 0 24 24"><rect x="0" y="0" width="11.500" height="11.500" fill="url(#tw)"/><rect x="12.500" y="0" width="11.500" height="11.500" fill="url(#tw)"/><rect x="0" y="12.500" width="11.500" height="11.500" fill="#1a8ae0"/><rect x="12.500" y="12.500" width="11.500" height="11.500" fill="#0f70cc"/></svg>
<div class="a" style="left:763px;top:1041px;width:219px;height:30px;border-radius:15px;background:#f6f9fe;box-shadow:0 1px 1px rgba(60,80,120,.3)"></div>
<svg class="a" style="left:774px;top:1048px" width="16" height="16" viewBox="0 0 16 16" fill="none" stroke="#222" stroke-width="1.500"><circle cx="7" cy="7" r="5.500"/><path d="M11 11L15 15"/></svg>
<div class="a" style="left:800px;top:1049px;font-size:13px;color:#555">Search</div>
<svg class="a" style="left:936px;top:1044px" width="40" height="26" viewBox="0 0 40 26"><path d="M1 10L22 2V17L2 24Z" fill="#a5613f"/><path d="M1.500 14L22 7V9.500L1.500 17Z" fill="#d8a178"/><circle cx="27" cy="19" r="7" fill="#6b3c20"/><circle cx="33" cy="15" r="5" fill="#8a5030"/><circle cx="29" cy="11" r="3" fill="#a46a44"/></svg>
<svg class="a" style="left:995px;top:1044px" width="24" height="26" viewBox="0 0 24 26"><path d="M2 16Q0 4 8 2H15Q12 8 11 17Z" fill="url(#cg)"/><path d="M9 18Q20 16 18 4Q24 6 23 12Q22 20 14 20Z" fill="#b16cf0"/><path d="M8 5L16 2L12 12Z" fill="#7ad35e" opacity=".8"/><rect x="5" y="16" width="18" height="9" rx="2" fill="#f7b81a"/><text x="14" y="23.500" font-size="7.500" font-weight="bold" text-anchor="middle" fill="#222" font-family="Liberation Sans">PRE</text></svg>
<svg class="a" style="left:1038px;top:1044px" width="25" height="24" viewBox="0 0 25 24"><rect x="7" y="1" width="17" height="16" rx="1" fill="#f8f8f8"/><rect x="1" y="7" width="17" height="16" rx="1" fill="#222"/><rect x="7" y="7" width="11" height="10" fill="#aaa"/></svg>
<svg class="a" style="left:1083px;top:1044px" width="25" height="24" viewBox="0 0 25 24"><path d="M0 2Q0 1 1 1H9L12 4H24V8H0Z" fill="#e5a11d"/><rect x="0" y="4" width="24.500" height="19" rx="1" fill="#fcd34f"/><rect x="7" y="16" width="11" height="7" fill="#1e7dd8"/></svg>
<svg class="a" style="left:1127px;top:1044px" width="24" height="24" viewBox="0 0 24 24"><circle cx="12" cy="12" r="12" fill="url(#eg)"/><path d="M24 13Q24 8 17 7Q10 7 8 13Q9 9 13 9Q18 9 18 14Q14 15 15 18Q18 20 22 18Q24 16 24 13Z" fill="#d6f0f5" opacity=".35"/><path d="M15 16H23Q19 24 12 24Q5 22 6 14Q9 20 15 19Z" fill="#0f58b8"/></svg>
<div class="a" style="left:1164px;top:1037px;width:38px;height:38px;border-radius:4px;background:#eff4fc"></div>
<svg class="a" style="left:1171px;top:1044px" width="24" height="24" viewBox="0 0 24 24"><rect width="24" height="24" rx="5" fill="url(#ag)"/><path d="M7 3.500V18L11 15L14 21L16.500 19.500L14 14L19.500 14Z" fill="#f0a0e4"/></svg>
<div class="a" style="left:1175px;top:1072px;width:16px;height:3px;border-radius:2px;background:#0f6cd0"></div>

<svg class="a" style="left:1678px;top:1052px" width="12" height="8" viewBox="0 0 12 8" fill="none" stroke="#222" stroke-width="1.200"><path d="M1 7L6 2L11 7"/></svg>
<svg class="a" style="left:1708px;top:1048px" width="16" height="16" viewBox="0 0 16 16"><circle cx="8" cy="8" r="8" fill="#1a2a4a"/><circle cx="10.500" cy="6" r="2.800" fill="#fff"/><circle cx="10.500" cy="6" r="1.400" fill="#1a2a4a"/><path d="M0 8L6 11L9 8L8 12Q5 15 2 12Z" fill="#d7e4f2"/></svg>
<svg class="a" style="left:1740px;top:1048px" width="16" height="16" viewBox="0 0 16 16"><rect width="16" height="16" rx="3" fill="url(#ag)"/><path d="M5 2.500V12.500L7.500 10.500L9.500 14L11 13L9 9.500L12.500 9.500Z" fill="#f2a6e4"/></svg>
<svg class="a" style="left:1771px;top:1048px" width="18" height="17" viewBox="0 0 18 17" fill="none" stroke="#222" stroke-width="1"><path d="M10 11.500H1.500V2.500H11M4 15H11M7 12V15"/><rect x="12.500" y="1" width="3.500" height="10" rx="1.500"/><path d="M14.250 11V15"/></svg>
<svg class="a" style="left:1796px;top:1049px" width="18" height="15" viewBox="0 0 18 15" fill="none" stroke="#222" stroke-width="1"><path d="M1 5H4L8 1.500V13.500L4 10H1Z"/><path d="M10.500 5Q12 7.500 10.500 10M12.500 3.500Q15 7.500 12.500 11.500M14.500 2Q18 7.500 14.500 13"/></svg>
<div class="a" style="left:1781px;top:1041px;width:96px;text-align:right;font-size:12.500px;line-height:16px;color:#222">3:52 PM<br>7/7/2024</div>
<svg class="a" style="left:1886px;top:1049px" width="14" height="15" viewBox="0 0 14 15"><path d="M7 1Q2 2 2 7V10L0.500 12H13.500L12 10V7Q12 2 7 1Z" fill="#222"/><path d="M5 13H9Q8.500 15 7 15Q5.500 15 5 13Z" fill="#222"/><path d="M4.500 5H9M4.500 7H7.500M4.500 9H9" stroke="#eee" stroke-width=".8"/></svg>
</body></html>
